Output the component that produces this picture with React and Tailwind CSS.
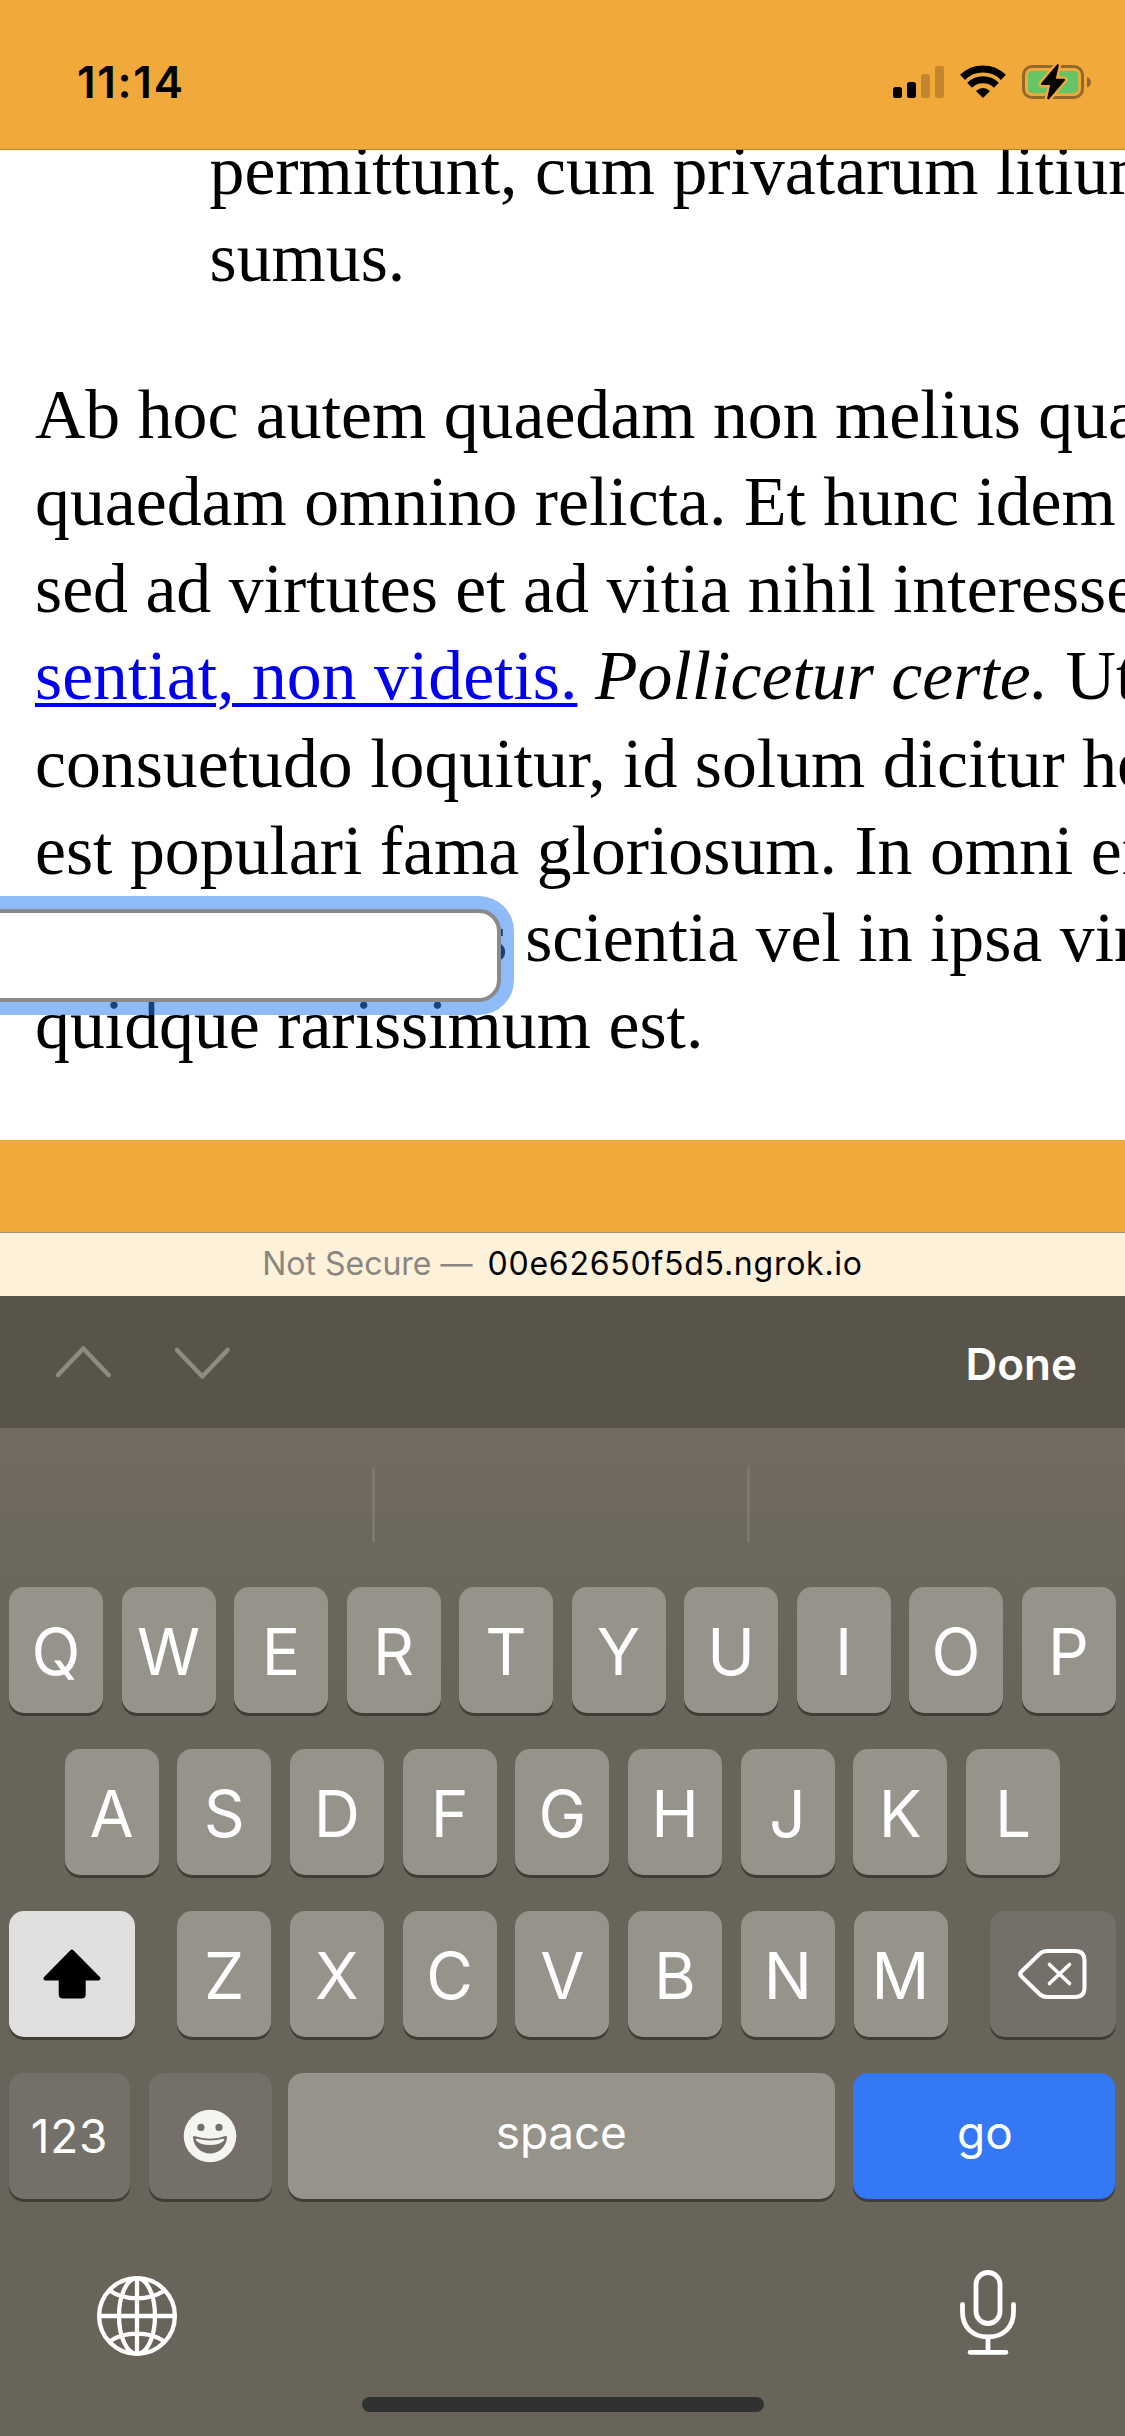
const KEY =
  "flex h-[126px] shrink-0 items-center justify-center rounded-[15px] shadow-[0_3px_0_#403d36]";
const LIGHT = "bg-[#96938b]";
const DARK = "bg-[#746f69]";

function Letter({ children }) {
  return (
    <div className={`${KEY} ${LIGHT} w-[94px] pt-[3px] text-[64px] leading-none`}>{children}</div>
  );
}

function StatusIcons() {
  return (
    <svg className="h-[40px] w-[205px]" viewBox="890 62 205 40" fill="none">
      <rect x="893" y="87" width="9" height="11" rx="2.5" fill="#000" />
      <rect x="907" y="82" width="9" height="16" rx="2.5" fill="#000" />
      <rect x="921" y="74" width="9" height="24" rx="2.5" fill="#c1872e" />
      <rect x="935" y="66" width="9" height="32" rx="2.5" fill="#c1872e" />
      <path d="M962.6 77.4a29 29 0 0 1 40.8 0" stroke="#000" strokeWidth="7.2" />
      <path d="M969.6 85.2a19.2 19.2 0 0 1 26.8 0" stroke="#000" strokeWidth="6.8" />
      <path d="M976 91.1Q983 84.8 990 91.1L983 98Z" fill="#000" />
      <rect x="1023.5" y="66.5" width="59" height="31" rx="8.5" stroke="#94682a" strokeWidth="3" />
      <rect x="1028" y="71" width="50.3" height="22.3" rx="4.5" fill="#65c466" />
      <path d="M1087 77a5.5 5.5 0 0 1 0 10.5Z" fill="#94682a" />
      <path
        d="M1057.8 65.2L1042 84h9.5l-3.2 14.3L1064 79.8h-9.6Z"
        fill="#000"
        stroke="#f1a93b"
        strokeWidth="7"
        strokeLinejoin="round"
      />
      <path
        d="M1057.8 65.2L1042 84h9.5l-3.2 14.3L1064 79.8h-9.6Z"
        fill="#000"
        stroke="#000"
        strokeWidth="2.2"
        strokeLinejoin="round"
      />
    </svg>
  );
}

function StatusBar() {
  return (
    <header className="flex h-[150px] items-start justify-between border-b border-[#bb8029] bg-[#f1a93b] pr-[30px] pl-[77px] pt-[62px]">
      <div className="text-[44px] leading-[40px] font-semibold tracking-[1.7px] text-black">11:14</div>
      <StatusIcons />
    </header>
  );
}

function Page() {
  return (
    <main className="relative h-[990px] overflow-hidden bg-white pl-[35px] font-['Liberation_Serif',serif] text-[69.76px] leading-[87.16px] whitespace-nowrap text-black">
      <p className="mt-[-23.4px] ml-[174.5px]">
        permittunt, cum privatarum litium
        <br />
        sumus.
      </p>
      <p className="mt-[70px]">
        Ab hoc autem quaedam non melius quam
        <br />
        quaedam omnino relicta. Et hunc idem
        <br />
        sed ad virtutes et ad vitia nihil interesse.
        <br />
        <a className="text-[#0000ee] underline decoration-[4.4px] underline-offset-[4px]">sentiat, non videtis.</a>{" "}
        <i>Pollicetur certe.</i> Ut
        <br />
        consuetudo loquitur, id solum dicitur honestum
        <br />
        est populari fama gloriosum. In omni enim
        <br />
        studio vel quavis scientia vel in ipsa virtute
        <br />
        quidque rarissimum est.
      </p>
      <div className="absolute top-[759px] left-[-40px] h-[93px] w-[541px] rounded-[22px] border-4 border-[#8a8a8a] bg-white shadow-[0_0_0_13px_rgba(40,125,243,0.52)]" />
    </main>
  );
}

function AddressBar() {
  return (
    <div className="flex h-[64px] items-center justify-center gap-[15px] border-t border-[#98927f] bg-[#fdf1da] pb-[1px] text-[32px] leading-none">
      <span className="text-[#8b8680]">Not Secure —</span>
      <span className="tracking-[0.75px] text-black">00e62650f5d5.ngrok.io</span>
    </div>
  );
}

function AccessoryBar() {
  return (
    <div className="flex h-[132px] items-center bg-[#595449] pr-[48px] pl-[56px] text-white">
      <svg className="h-[40px] w-[175px]" viewBox="56 1342 175 40" fill="none" stroke="#8f8b83" strokeWidth="4.5" strokeLinecap="round" strokeLinejoin="round">
        <path d="M58 1375L83.300 1348.500L108.600 1375" />
        <path d="M177 1350L202.300 1376.500L227.600 1350" />
      </svg>
      <div className="ml-auto pt-1 text-[44px] leading-none font-semibold">Done</div>
    </div>
  );
}

function ShiftIcon() {
  return (
    <svg className="h-[50px] w-[58px]" viewBox="43.500 1949.500 58 50">
      <path
        d="M71.2 1950.6q1.200-1.200 2.400 0L100.600 1977.800q1.200 2.600-1.500 3.100H86.200V1995q0 4-4 4H63.200q-4 0-4-4V1980.900H45.700q-2.600-.5-1.400-3.100Z"
        fill="#000"
      />
    </svg>
  );
}

function DeleteIcon() {
  return (
    <svg className="mr-[2px] h-[54px] w-[72px]" viewBox="1016 1947 72 54" fill="none" stroke="#fff" strokeWidth="4" strokeLinecap="round" strokeLinejoin="round">
      <path d="M1047 1951H1075Q1084.500 1951 1084.500 1960.500V1987.500Q1084.500 1997 1075 1997H1047Q1042.500 1997 1039.500 1994L1021.500 1976.500Q1019 1974 1021.500 1971.500L1039.500 1954Q1042.500 1951 1047 1951Z" />
      <path d="M1049.500 1964.500L1069.500 1983.500M1069.500 1964.500L1049.500 1983.500" strokeWidth="3.600" />
    </svg>
  );
}

function EmojiIcon() {
  return (
    <svg className="h-[54px] w-[54px]" viewBox="182.500 2109 54 54">
      <circle cx="209.500" cy="2136" r="26.300" fill="#f4f4f1" />
      <circle cx="200.400" cy="2127.400" r="3.600" fill="#746f69" />
      <circle cx="218.500" cy="2127.400" r="3.600" fill="#746f69" />
      <path d="M194 2136Q209.500 2141.500 225 2136Q226.800 2135.800 226.500 2138C225 2147.500 218.500 2153.400 209.500 2153.400C200.500 2153.400 194 2147.500 192.500 2138Q192.200 2135.800 194 2136Z" fill="#746f69" />
      <path d="M196.500 2138.700Q209.500 2142.200 222.500 2138.700Q224.500 2138.500 223.500 2140.500Q219 2145 209.500 2145Q200 2145 195.500 2140.500Q194.500 2138.500 196.500 2138.700Z" fill="#f4f4f1" />
    </svg>
  );
}

function GlobeIcon() {
  return (
    <svg className="h-[84px] w-[84px]" viewBox="95 2274 84 84" fill="none" stroke="#fff" strokeWidth="4.300">
      <circle cx="137" cy="2316" r="37.900" />
      <ellipse cx="137" cy="2316" rx="18" ry="37.900" />
      <path d="M137 2278V2354M99 2316H175M109.500 2290.500Q121 2298.300 137 2298.300T164.500 2290.500M109.500 2341.500Q121 2333.700 137 2333.700T164.500 2341.500" />
    </svg>
  );
}

function MicIcon() {
  return (
    <svg className="h-[90px] w-[60px]" viewBox="958 2268 60 90" fill="none" stroke="#fff" strokeWidth="4.800" strokeLinecap="round">
      <rect x="976" y="2272.500" width="24" height="51" rx="12" />
      <path d="M962.500 2304.500V2312C962.500 2327 972.500 2337 988 2337S1013.500 2327 1013.500 2312V2304.500M988 2338V2352M970 2352.300H1006" />
    </svg>
  );
}

function Keyboard() {
  return (
    <section className="flex h-[1008px] flex-col bg-linear-to-b from-[#726b60] via-[#6b675c] via-15% to-[#68645a] to-30% text-white">
      <div className="flex h-[159px] pt-[39px]">
        <div className="h-[75px] w-[375px] border-r-3 border-[#7d796d]" />
        <div className="h-[75px] w-[375px] border-r-3 border-[#7d796d]" />
      </div>
      <div className="flex flex-col gap-[36px]">
        <div className="flex justify-between pr-[9.5px] pl-[9px]">
          {[..."QWERTYUIOP"].map((k) => (
            <Letter key={k}>{k}</Letter>
          ))}
        </div>
        <div className="flex justify-between pr-[65px] pl-[64.5px]">
          {[..."ASDFGHJKL"].map((k) => (
            <Letter key={k}>{k}</Letter>
          ))}
        </div>
        <div className="flex justify-between pr-[9.5px] pl-[9px]">
          <div className={`${KEY} w-[126px] bg-[#e1e0de]`}>
            <ShiftIcon />
          </div>
          <div className="flex w-[770.5px] justify-between">
            {[..."ZXCVBNM"].map((k) => (
              <Letter key={k}>{k}</Letter>
            ))}
          </div>
          <div className={`${KEY} ${DARK} w-[126px]`}>
            <DeleteIcon />
          </div>
        </div>
        <div className="flex px-[9px] text-[46px] leading-none">
          <div className={`${KEY} ${DARK} mr-[18.500px] w-[121px] tracking-[0.8px]`}>123</div>
          <div className={`${KEY} ${DARK} mr-[16.5px] w-[123px]`}>
            <EmojiIcon />
          </div>
          <div className={`${KEY} ${LIGHT} mr-[18.500px] w-[546.500px] pb-[9px] tracking-[-0.2px]`}>space</div>
          <div className={`${KEY} w-[262px] bg-[#3478f6] pb-[9px] pl-[2px]`}>go</div>
        </div>
      </div>
      <div className="flex items-start justify-between pt-[69px] pr-[107px] pl-[95px]">
        <div className="pt-[6px]">
          <GlobeIcon />
        </div>
        <MicIcon />
      </div>
      <div className="mx-auto mt-auto mb-[24px] h-[15px] w-[402px] rounded-full bg-[#313131]" />
    </section>
  );
}

export default function App() {
  return (
    <div className="h-[2436px] w-[1125px] overflow-hidden bg-[#f1a93b] font-['Inter',sans-serif]">
      <StatusBar />
      <Page />
      <div className="h-[92px] bg-[#f1a93b]" />
      <AddressBar />
      <AccessoryBar />
      <Keyboard />
    </div>
  );
}
